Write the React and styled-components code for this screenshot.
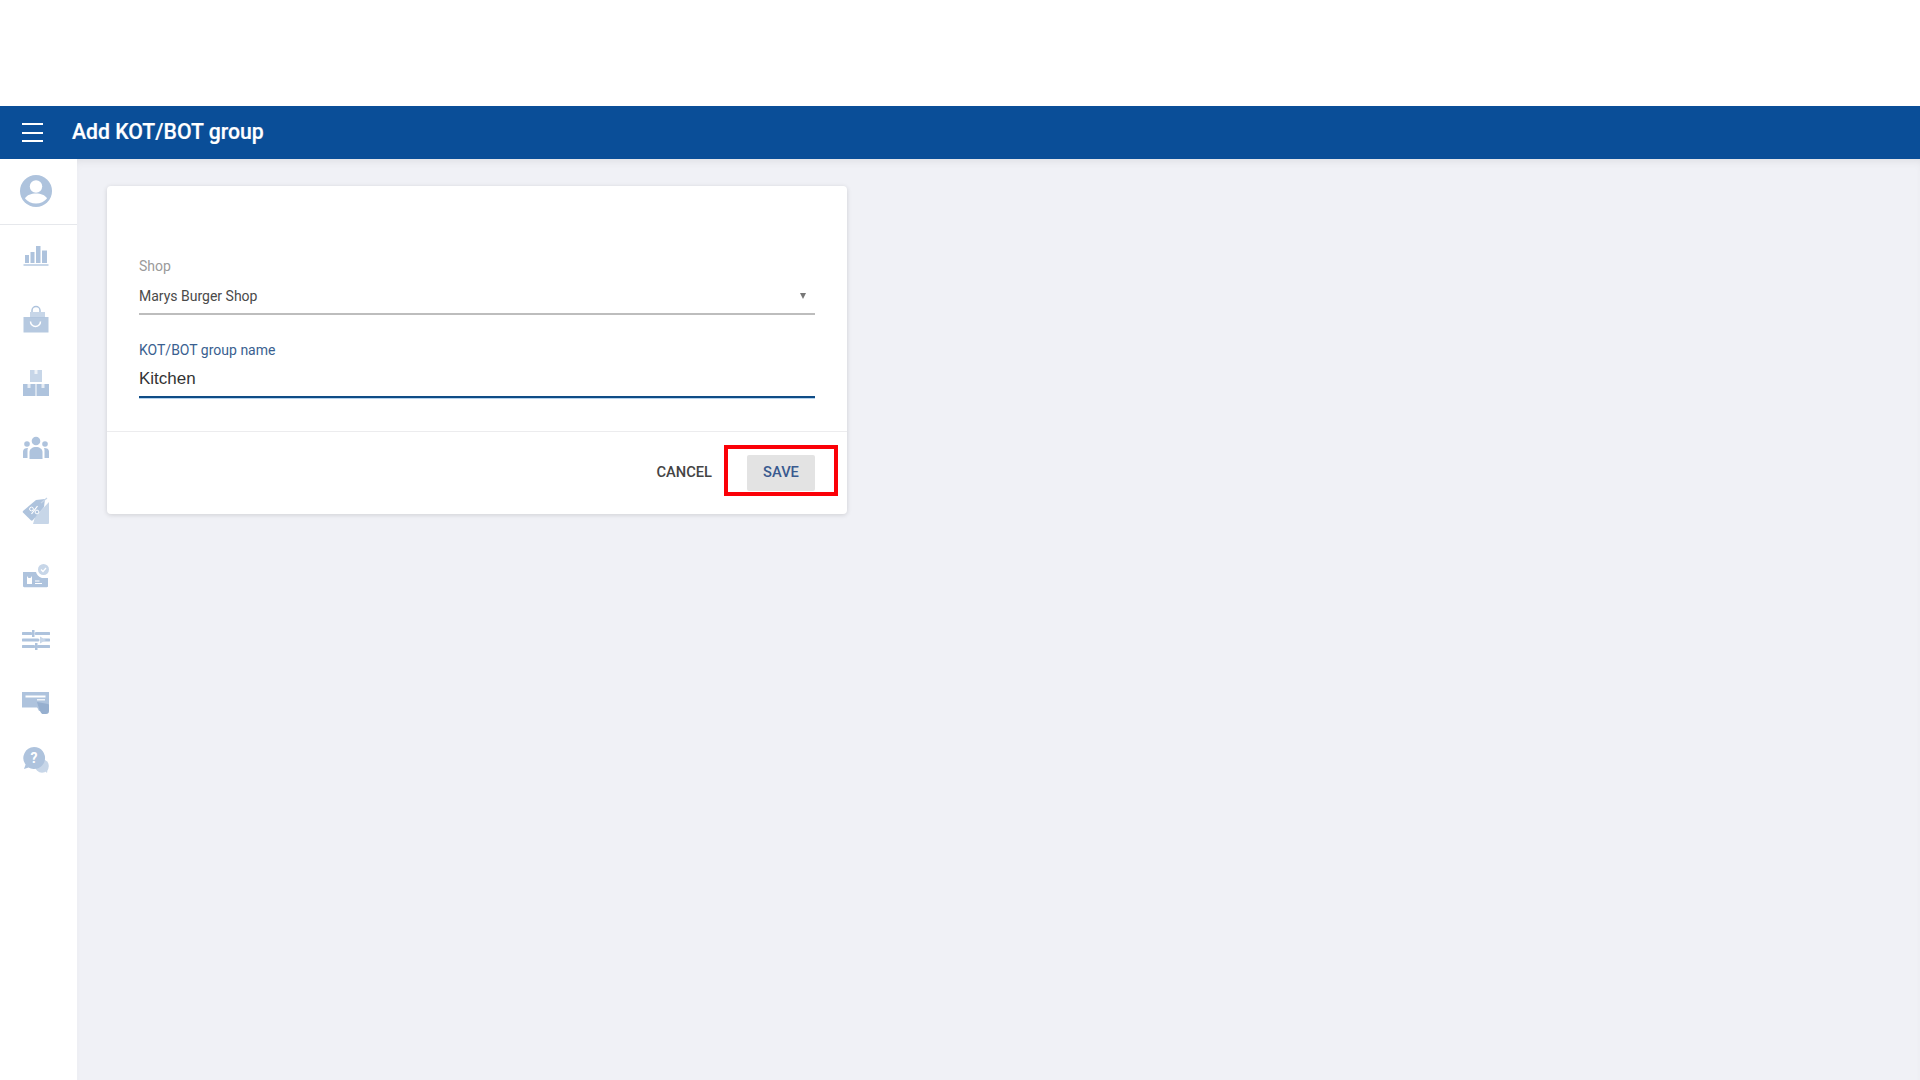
import React from 'react';
import styled, { createGlobalStyle } from 'styled-components';

const Global = createGlobalStyle`
  html, body { margin: 0; padding: 0; background: #fff; }
  body { font-family: Roboto, "Liberation Sans", sans-serif; }
  * { box-sizing: border-box; }
`;

const Page = styled.div`
  width: 1920px;
  height: 1080px;
  display: flex;
  flex-direction: column;
  overflow: hidden;
  background: #fff;
`;
const TopGap = styled.div`height: 106px; flex: none; background: #fff;`;
const Header = styled.header`
  height: 53px;
  flex: none;
  background: #0a4e98;
  display: flex;
  align-items: center;
  padding-left: 22px;
  gap: 29px;
  position: relative;
  z-index: 2;
`;
const Burger = styled.div`
  width: 21px;
  height: 19px;
  display: flex;
  flex-direction: column;
  justify-content: space-between;
  span { display: block; height: 2px; background: #fff; }
`;
const Title = styled.h1`
  margin: 0 0 1px;
  font-size: 21.2px;
  line-height: 24px;
  font-weight: 500;
  color: #fff;
  -webkit-text-stroke: 0.2px #fff;
`;
const Body = styled.div`flex: 1; display: flex; min-height: 0;`;
const Sidebar = styled.nav`
  width: 77px;
  flex: none;
  background: #fff;
  display: flex;
  flex-direction: column;
  box-shadow: 2px 0 4px rgba(0,0,0,0.05);
`;
const ProfileCell = styled.div`
  height: 66px;
  flex: none;
  border-bottom: 1px solid #e6e8ec;
  display: flex;
  justify-content: center;
  padding: 16px 5px 0 0;
`;
const IconColumn = styled.div`
  display: flex;
  flex-direction: column;
  align-items: center;
  padding: 16px 5px 0 0;
`;
const IconSlot = styled.div`
  width: 28px;
  height: 28px;
  flex: none;
  margin-top: ${p => p.$gap}px;
  svg { display: block; }
`;
const Main = styled.main`
  flex: 1;
  background: #f0f1f6;
  padding: 27px 30px;
  box-shadow: inset 0 6px 8px -4px rgba(0,0,0,0.08);
`;
const Card = styled.section`
  width: 740px;
  height: 328px;
  background: #fff;
  border-radius: 4px;
  box-shadow: 0 1px 5px rgba(0,0,0,0.14);
  display: flex;
  flex-direction: column;
`;
const Form = styled.div`
  height: 246px;
  flex: none;
  padding: 71px 32px 0;
  border-bottom: 1px solid #ececee;
`;
const Field = styled.div`
  margin-bottom: ${p => p.$mb || 0}px;
`;
const Label = styled.div`
  font-size: 14px;
  line-height: 18px;
  height: 18px;
  color: ${p => p.$active ? '#3a5f90' : '#9a9a9a'};
`;
const SelectValue = styled.div`
  height: 37px;
  margin-top: 3px;
  display: flex;
  align-items: center;
  justify-content: space-between;
  font-size: 14px;
  color: #4a4a4a;
  border-bottom: 2px solid #bdbdbd;
  padding: 0 9px 0 0;
`;
const Caret = styled.span`
  width: 0;
  height: 0;
  border-left: 3px solid transparent;
  border-right: 3px solid transparent;
  border-top: 6px solid #777;
`;
const InputValue = styled.div`
  height: 36px;
  margin-top: 3px;
  display: flex;
  align-items: center;
  font-family: "Liberation Sans", Arial, sans-serif;
  font-size: 17px;
  color: #333;
  border-bottom: 2px solid #0f4c86;
  box-shadow: 0 1px 0 #b5d3ef;
`;
const Footer = styled.div`
  flex: 1;
  position: relative;
  display: flex;
  justify-content: flex-end;
  align-items: center;
  padding: 0 32px 1px 0;
  gap: 35px;
`;
const TextButton = styled.button`
  border: 0;
  background: ${p => p.$primary ? '#e3e3e3' : 'transparent'};
  color: ${p => p.$primary ? '#3a5a8f' : '#444'};
  font-family: inherit;
  font-size: 14.7px;
  font-weight: 500;
  height: 36px;
  width: ${p => p.$primary ? '68px' : 'auto'};
  padding: 0 0 2px;
  border-radius: 2px;
  text-transform: uppercase;
`;
const Highlight = styled.div`
  position: absolute;
  left: 617px;
  top: 13px;
  width: 114px;
  height: 51px;
  border: 4.500px solid #fb0007;
  pointer-events: none;
`;

const C1 = '#aec3dd';
const C2 = '#c7d6e8';
const Svg = ({ children }) => <svg width="28" height="28" viewBox="0 0 28 28">{children}</svg>;

const Avatar = () => (
  <svg width="32" height="32" viewBox="0 0 32 32">
    <circle cx="16" cy="16" r="16" fill={C1} />
    <circle cx="16" cy="11.500" r="6.200" fill="#fff" />
    <path d="M5 23.500c2-3.600 6-5 11-5s9 1.400 11 5c-2.600 3-6.600 5-11 5s-8.400-2-11-5z" fill="#fff" />
  </svg>
);
const icons = [
  { gap: 0, el: <Svg><path d="M3 14h4v8H3zM8.500 11h4v11h-4zM14 5h4.500v17H14zM20 9.500h5V22h-5z" fill={C1}/><path d="M1.500 23h25v2h-25z" fill={C2}/></Svg> },
  { gap: 36, el: <Svg><path d="M10 8V5.500a4 4 0 0 1 8 0V8" fill="none" stroke={C1} strokeWidth="1.500"/><path d="M8 7h15v6H8z" fill={C2}/><path d="M1.500 12h25v15.500H1.500z" fill={C1} opacity=".9"/><path d="M8.500 16.500a5 5 0 0 0 10 0" fill="none" stroke="#fff" strokeWidth="1.500"/></Svg> },
  { gap: 37, el: <Svg><path d="M8 0h12v12H8z" fill={C2}/><path d="M1 14h12.500v12H1zM14.500 14H27v12H14.500z" fill={C1}/><path d="M12.500 0h3v4h-3zM5.500 14h3v4h-3zM19.500 14h3v4h-3z" fill="#fff" opacity=".7"/></Svg> },
  { gap: 36, el: <Svg><circle cx="14" cy="7" r="4.300" fill={C1}/><circle cx="5" cy="10" r="2.800" fill={C1}/><circle cx="23" cy="10" r="2.800" fill={C1}/><path d="M7.500 25v-7c0-3 3-5 6.500-5s6.500 2 6.500 5v7z" fill={C1}/><path d="M1 24v-6.500C1 15 3 14 6 14c-.5 1-.500 2-.500 3v7zM27 24v-6.500c0-2.500-2-3.500-5-3.500.5 1 .500 2 .500 3v7z" fill={C1}/></Svg> },
  { gap: 35, el: <Svg><path d="M11 27h14.500c1 0 1.500-.5 1.500-1.500V5L13 20z" fill={C2}/><path d="M1 14L14 3l9-1-1 8-11 13c-.8.800-1.500.800-2.200.200L1 15.500c-.4-.5-.4-1 0-1.500z" fill={C1}/><circle cx="9.500" cy="12" r="1.900" fill="none" stroke="#fff" strokeWidth="1"/><circle cx="15" cy="15" r="1.900" fill="none" stroke="#fff" strokeWidth="1"/><path d="M9.500 17l6-8" stroke="#fff" strokeWidth="1.200"/><path d="M19 6l6-5" stroke={C2} strokeWidth="1.200"/></Svg> },
  { gap: 38, el: <Svg><circle cx="21.500" cy="6.500" r="5.500" fill={C2}/><path d="M19 6.500l2 2 3-3.500" fill="none" stroke="#fff" strokeWidth="1.200"/><path d="M1 9h13c.5 2 2.500 5 6 6h6v8c0 .8-.4 1.200-1.200 1.200H2.200C1.400 24.200 1 23.800 1 23z" fill={C1}/><path d="M5 13l1.500 2h2l1.500-2v8H5z" fill="#fff"/><path d="M13 18h4.500M13 20.500h7" stroke="#fff" strokeWidth="1.200"/></Svg> },
  { gap: 35, el: <Svg><path d="M1 7.500h8M14 7.500h13M1 14h15M22 14h5M1 20.500h11M16 20.500h11" stroke={C1} strokeWidth="3" strokeLinecap="round"/><path d="M10 4h2.500v7H10zM13 17h2.500v7H13z" fill={C1}/><path d="M18 10.500l6 3.500-6 3.500z" fill={C2}/></Svg> },
  { gap: 34, el: <Svg><path d="M0 4h27v19H17l-3-6H0z" fill={C1}/><path d="M0 4h27v15.500H0z" fill={C1}/><path d="M3.500 7.500h20v2h-20z" fill="#fff"/><path d="M15 11h8v1.500h-8z" fill="#fff" opacity=".8"/><path d="M15 14l11 2c1 .3 1 1 1 2v5c0 2-1 3-3 3h-3c-2 0-3-2-6-12z" fill="#96afcf"/></Svg> },
  { gap: 30, el: <Svg><circle cx="20" cy="20" r="6.800" fill={C2}/><path d="M21 23l4 4 1-6z" fill={C2}/><path d="M12 1a11 11 0 1 1-5.500 20.500L2 23l1.600-4.400A11 11 0 0 1 12 1z" fill={C1}/><text x="12" y="17" textAnchor="middle" fontFamily="Roboto, sans-serif" fontWeight="700" fontSize="14" fill="#fff">?</text></Svg> },
];

export default function App() {
  return (
    <Page>
      <Global />
      <TopGap />
      <Header>
        <Burger><span /><span /><span /></Burger>
        <Title>Add KOT/BOT group</Title>
      </Header>
      <Body>
        <Sidebar>
          <ProfileCell><Avatar /></ProfileCell>
          <IconColumn>
            {icons.map((ic, i) => <IconSlot key={i} $gap={ic.gap}>{ic.el}</IconSlot>)}
          </IconColumn>
        </Sidebar>
        <Main>
          <Card>
            <Form>
              <Field $mb={26}>
                <Label>Shop</Label>
                <SelectValue>Marys Burger Shop<Caret /></SelectValue>
              </Field>
              <Field>
                <Label $active>KOT/BOT group name</Label>
                <InputValue>Kitchen</InputValue>
              </Field>
            </Form>
            <Footer>
              <TextButton>Cancel</TextButton>
              <TextButton $primary>Save</TextButton>
              <Highlight />
            </Footer>
          </Card>
        </Main>
      </Body>
    </Page>
  );
}
